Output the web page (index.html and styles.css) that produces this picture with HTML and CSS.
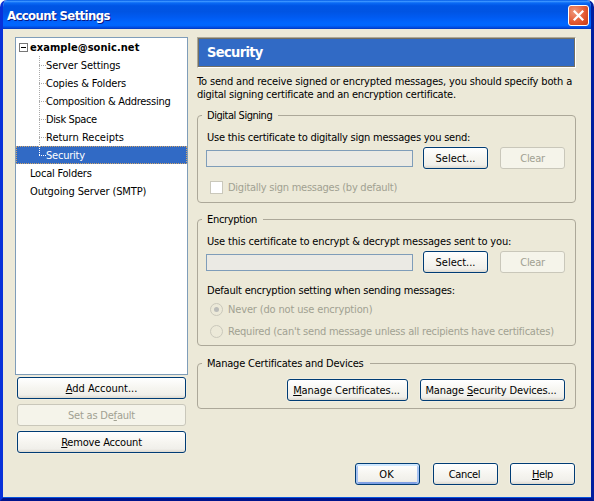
FILE: index.html
```html
<!DOCTYPE html>
<html lang="en">
<head>
<meta charset="utf-8">
<title>Account Settings</title>
<link rel="stylesheet" href="styles.css">
</head>
<body>
<div class="window">
  <header class="titlebar">
    <h1 class="caption">Account Settings</h1>
    <button class="close" aria-label="Close">
      <svg width="19" height="19" viewBox="0 0 19 19"><path d="M4.8 4.8 14.2 14.2M14.2 4.8 4.8 14.2" stroke="#fff" stroke-width="2.3" fill="none"/></svg>
    </button>
  </header>
  <div class="content">
    <aside class="sidebar">
      <ul class="tree">
        <li class="row root"><svg class="twisty" width="9" height="9" viewBox="0 0 9 9" shape-rendering="crispEdges"><path d="M.5.5h8v8h-8z" fill="#fff" stroke="#777"/><path d="M2 4.5h5" stroke="#000"/></svg><span class="t-root">example@sonic.net</span></li>
        <li class="row child"><span class="t-server">Server Settings</span></li>
        <li class="row child"><span class="t-copies">Copies &amp; Folders</span></li>
        <li class="row child"><span class="t-comp">Composition &amp; Addressing</span></li>
        <li class="row child"><span class="t-disk">Disk Space</span></li>
        <li class="row child"><span class="t-return">Return Receipts</span></li>
        <li class="row child last selected"><span class="t-security">Security</span></li>
        <li class="row top"><span class="t-local">Local Folders</span></li>
        <li class="row top"><span class="t-smtp">Outgoing Server (SMTP)</span></li>
      </ul>
      <div class="account-actions">
        <button class="btn"><span class="t-add"><u>A</u>dd Account...</span></button>
        <button class="btn disabled"><span class="t-default">Set as De<u>f</u>ault</span></button>
        <button class="btn"><span class="t-remove"><u>R</u>emove Account</span></button>
      </div>
    </aside>
    <main class="panel">
      <h2 class="heading"><span class="t-heading">Security</span></h2>
      <p class="intro"><span class="t-intro1">To send and receive signed or encrypted messages, you should specify both a</span><br><span class="t-intro2">digital signing certificate and an encryption certificate.</span></p>
      <section class="group signing">
        <h3 class="legend"><span class="t-signing">Digital Signing</span></h3>
        <div class="label"><span class="t-use1">Use this certificate to digitally sign messages you send:</span></div>
        <div class="picker">
          <div class="field"></div>
          <button class="btn small"><span class="t-select">Select...</span></button>
          <button class="btn small disabled"><span class="t-clear">Clear</span></button>
        </div>
        <div class="option"><i class="check"></i><span class="t-sign">Digitally sign messages (by default)</span></div>
      </section>
      <section class="group encryption">
        <h3 class="legend"><span class="t-enc">Encryption</span></h3>
        <div class="label"><span class="t-use2">Use this certificate to encrypt &amp; decrypt messages sent to you:</span></div>
        <div class="picker">
          <div class="field"></div>
          <button class="btn small"><span class="t-select">Select...</span></button>
          <button class="btn small disabled"><span class="t-clear">Clear</span></button>
        </div>
        <div class="label setting"><span class="t-setting">Default encryption setting when sending messages:</span></div>
        <div class="option never"><i class="radio on"></i><span class="t-never">Never (do not use encryption)</span></div>
        <div class="option required"><i class="radio"></i><span class="t-required">Required (can't send message unless all recipients have certificates)</span></div>
      </section>
      <section class="group manage">
        <h3 class="legend"><span class="t-manage">Manage Certificates and Devices</span></h3>
        <div class="manage-actions">
          <button class="btn certs"><span class="t-certs"><u>M</u>anage Certificates...</span></button>
          <button class="btn devices"><span class="t-devices">Manage <u>S</u>ecurity Devices...</span></button>
        </div>
      </section>
      <footer class="dialog-actions">
        <button class="btn small primary"><span class="t-ok">OK</span></button>
        <button class="btn small"><span class="t-cancel">Cancel</span></button>
        <button class="btn small"><span class="t-help"><u>H</u>elp</span></button>
      </footer>
    </main>
  </div>
</div>
</body>
</html>
```
FILE: styles.css
```css
* { box-sizing: border-box; margin: 0; padding: 0; }
body {
  width: 594px; height: 501px; overflow: hidden; background: #fff;
  font: 11px/13px "DejaVu Sans Condensed", "DejaVu Sans", sans-serif; color: #000;
}
.window {
  width: 594px; height: 501px; border: solid; border-width: 0 3px 3px;
  border-color: #0831d9 #001ea0 #00138c #0831d9;
  border-radius: 7px 7px 0 0; background: #ece9d8; overflow: hidden;
  box-shadow: inset 0 -1px #0855dd;
}
.titlebar {
  height: 29px; margin: 0 -3px; padding: 2px 5px 0 7px; display: flex; align-items: center; justify-content: space-between;
  background: linear-gradient(#0058e6 0, #3a93ff 5%, #0a6af5 10%, #0055e5 20%, #0054e3 40%, #005bf2 60%, #0066ff 80%, #0065fc 88%, #0144d8 97%, #0036b8 100%);
}
.caption { font: bold 13px/18px "DejaVu Sans Condensed", sans-serif; letter-spacing: -.6px; color: #fff; text-shadow: 1px 1px #0a1883; white-space: nowrap; }
.close { width: 21px; height: 21px; border: 1px solid #fff; border-radius: 3px; background: radial-gradient(circle at 30% 30%, #f0997c, #e35a33 55%, #c63a12); display: grid; place-items: center; }
.content { display: flex; gap: 9px; padding: 8px 15px 0 12px; }
.sidebar { width: 173px; }
.tree { height: 338px; background: #fff; border: 1px solid #7f9db9; list-style: none; }
.row { height: 18px; display: flex; align-items: center; white-space: nowrap; }
.btn span, .label span, .option span, .legend span, .intro span, .heading span { white-space: nowrap; }
.root { font-weight: bold; padding-left: 3px; gap: 2px; }
.t-root { letter-spacing: .06px; }
.top { padding-left: 14px; }
.child { padding-left: 23px; }
.child::before { content: ""; width: 7px; height: 18px; flex: none; background: repeating-linear-gradient(#aaa 0 1px, transparent 1px 2px) 0 0 / 1px 18px no-repeat, repeating-linear-gradient(90deg, #aaa 0 1px, transparent 1px 2px) 0 9px / 7px 1px no-repeat; }
.last::before { background: repeating-linear-gradient(#fff 0 1px, transparent 1px 2px) 0 0 / 1px 10px no-repeat, repeating-linear-gradient(90deg, #fff 0 1px, transparent 1px 2px) 0 9px / 7px 1px no-repeat; }
.selected { background: #316ac5; color: #fff; outline: 1px dotted #cfa56b; outline-offset: -1px; }
.account-actions { display: grid; gap: 5px; padding: 2px 2px 0; }
.btn {
  height: 22px; border: 1px solid #003c74; border-radius: 3px; font: inherit; color: #000;
  background: linear-gradient(#fff, #f6f5f0 50%, #f0efea 85%, #dcd8cf); white-space: nowrap;
  display: flex; align-items: center; justify-content: center; box-shadow: 0 0 0 1px #f1eee2;
}
.account-actions .btn { width: 169px; }
.small { width: 65px; flex: none; }
.disabled { background: #f5f4ea; border-color: #c9c7ba; color: #a1a192; box-shadow: none; }
u { text-decoration: underline; text-underline-offset: 1px; text-decoration-thickness: 1px; text-decoration-skip-ink: none; }
.panel { width: 379px; }
.heading { height: 31px; border: 1px solid; border-color: #aca899 #fff #fff #aca899; box-shadow: inset 0 0 0 1px #716f64; background: #316ac5; color: #fff; font-size: 14.5px; line-height: 29px; padding-left: 9px; letter-spacing: -.65px; }
.intro { padding-top: 7px; height: 47px; }
.group { border: 1px solid #aca899; border-radius: 4px; padding: 0 10px 0 8px; }
.signing { height: 88px; }
.encryption { height: 127px; margin-top: 16px; }
.manage { height: 46px; margin-top: 17px; }
.legend { font: inherit; width: max-content; margin: -7px 0 0 -4px; padding: 0 6px 0 5px; height: 14px; line-height: 14px; background: #ece9d8; }
.label { margin: 8px 0 0 1px; height: 13px; }
.picker { display: flex; align-items: center; margin-top: 3px; height: 22px; }
.field { width: 207px; height: 17px; border: 1px solid #7f9db9; background: #ebeae4; margin-right: 10px; }
.picker .disabled { margin-left: 12px; }
.option { display: flex; align-items: center; gap: 5px; height: 13px; padding-left: 4px; color: #a1a192; }
.signing .option { margin-top: 12px; }
.check { width: 13px; height: 13px; flex: none; border: 1px solid #cac8bb; background: #fff; }
.radio { width: 13px; height: 13px; flex: none; border: 1px solid #cac8bb; border-radius: 50%; display: grid; place-items: center; }
.on::before { content: ""; width: 5px; height: 5px; border-radius: 50%; background: #bbbcb9; }
.setting { margin-top: 11px; }
.never { margin-top: 6px; }
.required { margin-top: 9px; }
.manage-actions { display: flex; justify-content: flex-end; gap: 12px; margin-top: 8px; }
.certs { width: 121px; }
.devices { width: 145px; }
.dialog-actions { display: flex; justify-content: flex-end; padding: 54px 1px 0 0; gap: 12px; }
.primary { margin-right: 1px; box-shadow: inset 0 2px #cee7ff, inset 2px 0 #a6c2f2, inset -2px 0 #a6c2f2, inset 0 -2px #7fa0e4; }

/* Letter fitting */
.t-server, .t-smtp { letter-spacing: -.12px; }
.t-copies, .t-remove { letter-spacing: -.18px; }
.t-comp { letter-spacing: -.25px; }
.t-disk { letter-spacing: -.38px; }
.t-security, .t-local { letter-spacing: -.22px; }
.t-intro1 { letter-spacing: -.158px; }
.t-intro2, .t-use1 { letter-spacing: -.232px; }
.t-signing { letter-spacing: -.46px; }
.t-enc, .t-clear, .t-cancel { letter-spacing: -.32px; }
.t-use2, .t-never { letter-spacing: -.152px; }
.t-setting, .t-manage, .t-default { letter-spacing: -.205px; }
.t-sign { letter-spacing: -.25px; }
.t-required { letter-spacing: -.215px; }
.t-certs { letter-spacing: -.08px; margin-right: 2px; }
.t-devices { letter-spacing: -.14px; margin-right: 3px; }
.t-ok, .t-cancel { margin-right: 2px; }
.t-help { letter-spacing: -.4px; }
```
